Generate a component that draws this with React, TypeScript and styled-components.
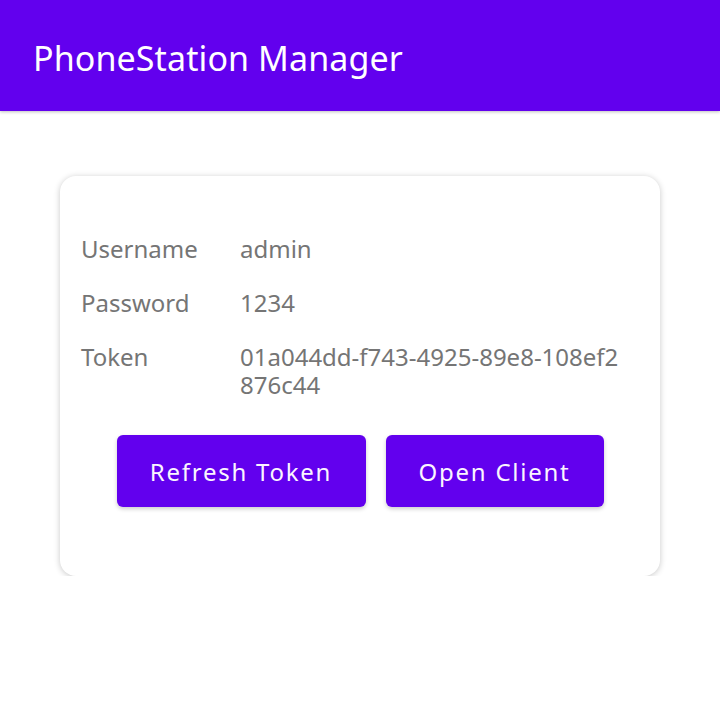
import React from "react";
import styled, { createGlobalStyle } from "styled-components";

const Global = createGlobalStyle`
  html, body { margin: 0; padding: 0; background: #ffffff; }
  body { font-family: "Noto Sans", "Open Sans", sans-serif; }
`;

const AppBar = styled.header`
  height: 111px;
  background: #6200ee;
  display: flex;
  align-items: center;
  padding: 4px 0 0 33px;
  box-sizing: border-box;
  box-shadow: 0 1px 3px rgba(0, 0, 0, 0.25);
`;

const Title = styled.h1`
  margin: 0;
  color: #ffffff;
  font-size: 34px;
  font-weight: 400;
  letter-spacing: 0.1px;
`;

const Main = styled.main`
  padding: 65px 60px 0;
`;

const Card = styled.section`
  width: 600px;
  height: 400px;
  box-sizing: border-box;
  border-radius: 16px;
  background: #fff;
  box-shadow: 0 1px 6px rgba(0, 0, 0, 0.22);
  padding: 59px 21px 0 21px;
  display: flex;
  flex-direction: column;
`;

const InfoGrid = styled.div`
  display: grid;
  grid-template-columns: 159px 385px;
  row-gap: 26px;
`;

const Label = styled.div`
  font-size: 24px;
  line-height: 28px;
  color: #757575;
`;

const Value = styled.div`
  font-size: 24px;
  line-height: 28px;
  color: #757575;
  word-break: break-all;
`;

const Actions = styled.div`
  display: flex;
  justify-content: center;
  gap: 20px;
  margin-top: 36px;
`;

const Button = styled.button<{ $w: number }>`
  width: ${(p) => p.$w}px;
  height: 72px;
  border: none;
  border-radius: 6px;
  background: #6200ee;
  color: #fbf5ff;
  font-family: "Noto Sans", "Open Sans", sans-serif;
  font-size: 24px;
  letter-spacing: 1.75px;
  box-shadow: 0 2px 4px rgba(0, 0, 0, 0.2);
  cursor: pointer;
`;

export default function App() {
  return (
    <>
      <Global />
      <AppBar>
        <Title>PhoneStation Manager</Title>
      </AppBar>
      <Main>
        <Card>
          <InfoGrid>
            <Label>Username</Label>
            <Value>admin</Value>
            <Label>Password</Label>
            <Value>1234</Value>
            <Label>Token</Label>
            <Value>01a044dd-f743-4925-89e8-108ef2876c44</Value>
          </InfoGrid>
          <Actions>
            <Button $w={249}>Refresh Token</Button>
            <Button $w={218}>Open Client</Button>
          </Actions>
        </Card>
      </Main>
    </>
  );
}
